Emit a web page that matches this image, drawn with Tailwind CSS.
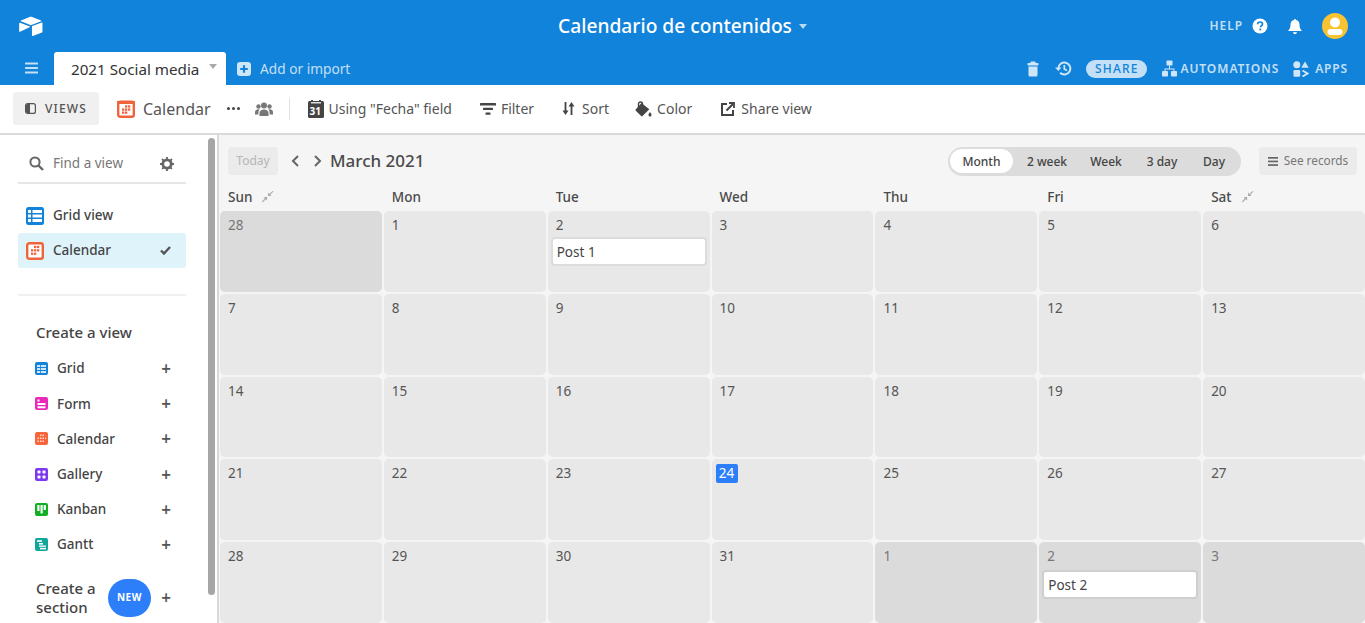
<!DOCTYPE html>
<html lang="en">
<head>
<meta charset="UTF-8">
<title>Calendario de contenidos</title>
<script src="https://cdn.jsdelivr.net/npm/@tailwindcss/browser@4"></script>
</head>
<body class="h-[623px] w-[1365px] overflow-hidden bg-white font-['Noto_Sans',sans-serif] text-[#444]">

<!-- top bar -->
<header class="h-[52px] bg-[#1283da] flex items-center text-white">
  <div class="flex-1 pl-[19px] flex items-center">
    <svg class="w-[24px] h-[21px]" viewBox="0 0 25 22" fill="#fff">
      <path d="M11 1 2 4.600c-.5.200-.5.800 0 1l9.200 3.600c.8.300 1.700.3 2.500 0L23 5.600c.5-.2.500-.8 0-1L13.700 1c-.9-.3-1.800-.3-2.700 0z"/>
      <path d="M13.500 11.200v9.300c0 .4.400.7.800.5l9.800-3.800c.3-.1.400-.3.400-.6V7.300c0-.4-.4-.7-.8-.5l-9.800 3.800c-.2.100-.4.300-.4.600z"/>
      <path d="M11.500 11.600 1 16.600c-.4.200-.9-.1-.9-.5V7.600c0-.4.500-.7.900-.5l10.400 3.900c.4.100.4.500.1.600z"/>
    </svg>
  </div>
  <div class="flex items-center gap-[7px] -ml-[2px]">
    <span class="text-[19.200px] font-medium leading-none">Calendario de contenidos</span>
    <span class="w-0 h-0 border-x-[4px] border-x-transparent border-t-[5px] border-t-white/70 mt-[1px]"></span>
  </div>
  <div class="flex-1 flex items-center justify-end pr-[17px]">
    <span class="text-[12px] font-semibold tracking-[0.08em] text-white/75">HELP</span>
    <svg class="w-[16px] h-[16px] ml-[9px]" viewBox="0 0 16 16"><circle cx="8" cy="8" r="7.500" fill="#fff"/><path d="M5.600 6.200C5.700 4.800 6.700 4 8.100 4c1.400 0 2.400.8 2.400 2 0 1-.6 1.500-1.300 2-.6.400-.8.700-.8 1.300" fill="none" stroke="#1283da" stroke-width="1.700"/><rect x="7.400" y="10.600" width="1.800" height="1.800" fill="#1283da"/></svg>
    <svg class="w-[16px] h-[17px] ml-[19px]" viewBox="0 0 16 17" fill="#fff"><path d="M8 1c-.6 0-1 .4-1 .9C4.800 2.400 3.500 4 3.500 6.500c0 3-.7 4.500-2 5.800-.3.300-.1.700.3.700h12.400c.4 0 .6-.4.300-.7-1.300-1.300-2-2.800-2-5.800C12.500 4 11.200 2.400 9 1.900 9 1.400 8.600 1 8 1z"/><path d="M6 14.200h4c0 1.100-.9 1.800-2 1.800s-2-.7-2-1.800z"/></svg>
    <div class="w-[26px] h-[26px] ml-[19px] rounded-full bg-[#f7c331] overflow-hidden flex items-center justify-center">
      <svg class="w-[26px] h-[26px]" viewBox="0 0 26 26" fill="#fff"><circle cx="13" cy="9.500" r="5"/><rect x="5.500" y="16" width="15" height="6" rx="3"/></svg>
    </div>
  </div>
</header>

<!-- tab row -->
<div class="h-[33px] bg-[#1283da] flex items-end text-white">
  <button class="w-[54px] h-[33px] flex items-center justify-center pl-[9px] pb-[1px]">
    <svg class="w-[14px] h-[12px]" viewBox="0 0 14 12" fill="#fff" opacity=".75"><rect y="0.500" width="13" height="2" rx=".6"/><rect y="5" width="13" height="2" rx=".6"/><rect y="9.500" width="13" height="2" rx=".6"/></svg>
  </button>
  <div class="relative w-[172px] h-[33px] bg-white rounded-t-[3px] flex items-center pl-[17px] pt-[1px] text-[#333] text-[15.200px]">
    2021 Social media
    <span class="absolute right-[9px] top-[12px] w-0 h-0 border-x-[4px] border-x-transparent border-t-[5px] border-t-[#aaa]"></span>
  </div>
  <div class="h-[33px] flex items-center ml-[11px] gap-[9px] pt-[1px] text-[13.700px] text-white/75">
    <svg class="w-[14px] h-[14px]" viewBox="0 0 13 13"><rect width="13" height="13" rx="3" fill="#cfe6f8"/><path d="M6.500 3v7M3 6.500h7" stroke="#1283da" stroke-width="2"/></svg>
    <span>Add or import</span>
  </div>
  <div class="ml-auto h-[33px] flex items-center pr-[17px] text-[12px] font-semibold tracking-[0.07em] text-white/75">
    <svg class="w-[12px] h-[16px] mr-[16px]" viewBox="0 0 12 16" fill="#cfe6f8"><rect x="3.500" y="0.500" width="5" height="2" rx=".5"/><rect x="0.500" y="2" width="11" height="2.500" rx=".8"/><path d="M1.500 5.500h9V14a1.500 1.500 0 0 1-1.500 1.500H3A1.500 1.500 0 0 1 1.500 14z"/></svg>
    <svg class="w-[17px] h-[15px] mr-[14px]" viewBox="0 0 17 15" fill="none" stroke="#cfe6f8" stroke-width="2"><path d="M3.300 7.500a6 6 0 1 1 1.800 4.300"/><path d="M9.300 4v4l2.700 1.600" stroke-width="1.700"/><path d="M0 6.500h6.500L3.300 10z" fill="#cfe6f8" stroke="none"/></svg>
    <span class="w-[61px] h-[18px] rounded-full bg-[#c4e0f7] text-[#1283da] flex items-center justify-center font-medium tracking-[0.1em] mr-[15px]">SHARE</span>
    <svg class="w-[15px] h-[17px] mr-[3px]" viewBox="0 0 15 17" fill="#cfe6f8"><rect x="4.500" y="0.500" width="6" height="5" rx=".8"/><rect x="0" y="11" width="6" height="5.500" rx=".8"/><rect x="9" y="11" width="6" height="5.500" rx=".8"/><path d="M7 5.500h1v3h4.500v3h-1v-2h-8v2h-1v-3H7z"/></svg>
    <span class="mr-[14px] tracking-[0.08em]">AUTOMATIONS</span>
    <svg class="w-[16px] h-[16px] mr-[6px]" viewBox="0 0 16 16" fill="#cfe6f8"><circle cx="3.800" cy="3.800" r="3.500"/><path d="M12 .5l3.700 6.300H8.300z"/><rect x="0.500" y="9" width="6.700" height="6.700" rx="1.200"/><path d="M9.500 9.500l5 3-5 3" fill="none" stroke="#cfe6f8" stroke-width="2"/></svg>
    <span>APPS</span>
  </div>
</div>

<!-- view toolbar -->
<div class="h-[50px] border-b-2 border-[#d9d9d9] flex items-center pl-[13px] pb-[1px] text-[14px] text-[#555]">
  <div class="w-[86px] h-[33px] bg-[#f0f0f0] rounded-[3px] flex items-center justify-center gap-[9px] text-[12px] font-medium tracking-[0.1em]">
    <svg class="w-[11px] h-[11px]" viewBox="0 0 11 11"><rect x=".6" y=".6" width="9.800" height="9.800" rx="2" fill="none" stroke="#555" stroke-width="1.200"/><path d="M1 2.500a1.500 1.500 0 0 1 1.500-1.500H5v9H2.500A1.500 1.500 0 0 1 1 8.500z" fill="#555"/></svg>
    VIEWS
  </div>
  <svg class="w-[18px] h-[18px] ml-[18px]" viewBox="0 0 18 18"><rect x="1.200" y="1.700" width="15.600" height="15.100" rx="2" fill="#fff" stroke="#f0643c" stroke-width="2.400"/><rect x="0" y="1" width="18" height="3" fill="#f0643c"/><g fill="#f0643c"><rect x="8" y="5.300" width="2.300" height="2.300"/><rect x="11" y="5.300" width="2.300" height="2.300"/><rect x="5" y="8.400" width="2.300" height="2.300"/><rect x="8" y="8.400" width="2.300" height="2.300"/><rect x="11" y="8.400" width="2.300" height="2.300"/><rect x="5" y="11.500" width="2.300" height="2.300"/><rect x="8" y="11.500" width="2.300" height="2.300"/></g></svg>
  <span class="ml-[8px] text-[16px]">Calendar</span>
  <span class="ml-[16px] flex gap-[2px]"><i class="w-[3px] h-[3px] rounded-full bg-[#444]"></i><i class="w-[3px] h-[3px] rounded-full bg-[#444]"></i><i class="w-[3px] h-[3px] rounded-full bg-[#444]"></i></span>
  <svg class="w-[18px] h-[14px] ml-[15px]" viewBox="0 0 18 14" fill="#777"><circle cx="9" cy="3.500" r="3"/><circle cx="3.500" cy="4.500" r="2.200"/><circle cx="14.500" cy="4.500" r="2.200"/><path d="M4.500 14v-3c0-2 2-3.500 4.500-3.500s4.500 1.500 4.500 3.500v3z"/><path d="M0 12.500V10c0-1.500 1.500-2.700 3.500-2.700.5 0 .7 0 .9.100-.7.900-1 2-1 3.100v2zM18 12.500V10c0-1.500-1.500-2.700-3.500-2.700-.5 0-.7 0-.9.100.7.900 1 2 1 3.100v2z"/></svg>
  <span class="w-px h-[22px] bg-[#e3e3e3] ml-[16px]"></span>
  <svg class="w-[16px] h-[18px] ml-[18px]" viewBox="0 0 16 18"><rect x="0" y="1" width="16" height="17" rx="1.500" fill="#444"/><rect x="3" y="0" width="2" height="3" fill="#444"/><rect x="11" y="0" width="2" height="3" fill="#444"/><rect x="3" y="2" width="10" height="1.500" fill="#ddd"/></svg>
  <span class="ml-[-14px] w-[13px] mt-[4px] text-[10px] font-bold text-white leading-none">31</span>
  <span class="ml-[6px]">Using "Fecha" field</span>
  <svg class="w-[16px] h-[12px] ml-[28px]" viewBox="0 0 16 12" fill="#444"><rect width="16" height="2.400" rx=".5"/><rect x="3" y="4.700" width="10" height="2.400" rx=".5"/><rect x="5.500" y="9.400" width="5" height="2.400" rx=".5"/></svg>
  <span class="ml-[5px]">Filter</span>
  <svg class="w-[13px] h-[13px] ml-[28px]" viewBox="0 0 13 13" fill="#444"><path d="M2.600 0h1.800v8.500h2.100L3.500 13 .5 8.500h2.100zM8.600 13h1.800V4.500h2.100L9.500 0l-3 4.500h2.100z"/></svg>
  <span class="ml-[7px]">Sort</span>
  <svg class="w-[17px] h-[16px] ml-[26px]" viewBox="0 0 17 16" fill="#444"><path d="M3.500 6V3a2 2 0 0 1 4 0v3" fill="none" stroke="#444" stroke-width="1.400"/><path d="M6.500 2 .8 8.300a1 1 0 0 0 0 1.400l5.300 5.300a1 1 0 0 0 1.400 0l6.800-6.800z"/><path d="M15 11c-.9 1.300-1.500 2-1.500 3a1.500 1.500 0 0 0 3 0c0-1-.6-1.700-1.500-3z"/></svg>
  <span class="ml-[5px]">Color</span>
  <svg class="w-[14px] h-[14px] ml-[29px]" viewBox="0 0 14 14" fill="none" stroke="#444" stroke-width="2"><path d="M6 2H1v11h11V8"/><path d="M5.500 8.500 12 2"/><path d="M8 1h5v5" stroke-width="1.800"/></svg>
  <span class="ml-[6px]">Share view</span>
</div>

<div class="flex h-[488px]">
  <!-- view sidebar -->
  <aside class="relative w-[219px] shrink-0 border-r-2 border-[#d9d9d9] pl-[18px] text-[13.500px] text-[#444]">
    <div class="absolute right-[2px] top-[3px] w-[7px] h-[457px] rounded-full bg-[#a6a6a6]"></div>
    <div class="w-[168px] h-[49px] border-b-2 border-[#e6e6e6] flex items-center pl-[11px] pt-[10px]">
      <svg class="w-[15px] h-[15px]" viewBox="0 0 15 15" fill="none" stroke="#666" stroke-width="2"><circle cx="6" cy="6" r="4.600"/><path d="M9.500 9.500 14 14" stroke-width="2.400"/></svg>
      <span class="ml-[9px] text-[#777]">Find a view</span>
      <svg class="w-[14px] h-[14px] ml-auto mr-[12px]" viewBox="0 0 14 14"><circle cx="7" cy="7" r="4.200" fill="none" stroke="#666" stroke-width="2.800"/><path d="M7 0v14M0 7h14M2 2l10 10M12 2 2 12" stroke="#666" stroke-width="1.800" stroke-dasharray="2.200 9.600 2.200"/></svg>
    </div>
    <div class="mt-[14px] w-[168px] h-[35px] flex items-center pl-[8px] gap-[9px]">
      <svg class="w-[18px] h-[18px]" viewBox="0 0 18 18"><rect width="18" height="18" rx="2.500" fill="#1283da"/><g fill="#fff"><rect x="2" y="3" width="3" height="3"/><rect x="6.500" y="3" width="9.500" height="3"/><rect x="2" y="7.500" width="3" height="3"/><rect x="6.500" y="7.500" width="9.500" height="3"/><rect x="2" y="12" width="3" height="3"/><rect x="6.500" y="12" width="9.500" height="3"/></g></svg>
      <span class="font-medium">Grid view</span>
    </div>
    <div class="w-[168px] h-[35px] bg-[#dff3fb] rounded-[3px] flex items-center pl-[8px] gap-[9px]">
      <svg class="w-[18px] h-[18px]" viewBox="0 0 18 18"><rect x="1.200" y="1.200" width="15.600" height="15.600" rx="2" fill="#fff" stroke="#f0643c" stroke-width="2.400"/><g fill="#f0643c"><rect x="8" y="3.800" width="2.300" height="2.300"/><rect x="11" y="3.800" width="2.300" height="2.300"/><rect x="5" y="7.200" width="2.300" height="2.300"/><rect x="8" y="7.200" width="2.300" height="2.300"/><rect x="11" y="7.200" width="2.300" height="2.300"/><rect x="5" y="10.600" width="2.300" height="2.300"/><rect x="8" y="10.600" width="2.300" height="2.300"/></g></svg>
      <span class="font-medium">Calendar</span>
      <svg class="w-[11px] h-[9px] ml-auto mr-[15px]" viewBox="0 0 11 9" fill="none" stroke="#555" stroke-width="2.400"><path d="M1 4.500 4 7.500 10 1"/></svg>
    </div>
    <div class="mt-[26px] w-[168px] border-t-2 border-[#f0f0f0]"></div>
    <div class="mt-[26px] ml-[18px] text-[15px] font-medium leading-5">Create a view</div>

    <div class="mt-[15px] w-[136px] ml-[17px] flex flex-col gap-[12.200px] font-medium">
      <div class="flex items-center h-[23px]">
        <svg class="w-[13px] h-[13px] mr-[9px]" viewBox="0 0 13 13"><rect width="13" height="13" rx="2" fill="#1283da"/><path d="M2 3h9v2H2zM2 6h9v2H2zM2 9h9v2H2z" fill="#cfe6f8"/><path d="M5 2h.8v9H5z" fill="#1283da"/></svg>
        <span>Grid</span><span class="ml-auto text-[17px] font-semibold leading-none text-[#555]">+</span>
      </div>
      <div class="flex items-center h-[23px]">
        <svg class="w-[13px] h-[13px] mr-[9px]" viewBox="0 0 13 13"><rect width="13" height="13" rx="2" fill="#e929ba"/><path d="M2.500 2.500h2v2h-2zM2.500 6h8v2h-8zM2.500 9.200h8v2h-8z" fill="#fff"/></svg>
        <span>Form</span><span class="ml-auto text-[17px] font-semibold leading-none text-[#555]">+</span>
      </div>
      <div class="flex items-center h-[23px]">
        <svg class="w-[13px] h-[13px] mr-[9px]" viewBox="0 0 13 13"><rect width="13" height="13" rx="2" fill="#f7653b"/><path d="M5 2.500h1.500V4H5zM7.500 2.500H9V4H7.500zM2.500 5.500H4V7H2.500zM5 5.500h1.500V7H5zM7.500 5.500H9V7H7.500zM10 5.500h1V7h-1zM2.500 8.500H4V10H2.500zM5 8.500h1.500V10H5zM7.500 8.500H9V10H7.500z" fill="#ffd9cc"/></svg>
        <span>Calendar</span><span class="ml-auto text-[17px] font-semibold leading-none text-[#555]">+</span>
      </div>
      <div class="flex items-center h-[23px]">
        <svg class="w-[13px] h-[13px] mr-[9px]" viewBox="0 0 13 13"><rect width="13" height="13" rx="2" fill="#7c39ed"/><g fill="#fff"><rect x="2.500" y="2.500" width="3" height="3" rx=".8"/><rect x="7.500" y="2.500" width="3" height="3" rx=".8"/><rect x="2.500" y="7.500" width="3" height="3" rx=".8"/><rect x="7.500" y="7.500" width="3" height="3" rx=".8"/></g></svg>
        <span>Gallery</span><span class="ml-auto text-[17px] font-semibold leading-none text-[#555]">+</span>
      </div>
      <div class="flex items-center h-[23px]">
        <svg class="w-[13px] h-[13px] mr-[9px]" viewBox="0 0 13 13"><rect width="13" height="13" rx="2" fill="#11af22"/><g fill="#fff"><rect x="2.300" y="2" width="2.200" height="6"/><rect x="5.500" y="2" width="2.200" height="8.500"/><rect x="8.700" y="2" width="2.200" height="5"/></g></svg>
        <span>Kanban</span><span class="ml-auto text-[17px] font-semibold leading-none text-[#555]">+</span>
      </div>
      <div class="flex items-center h-[23px]">
        <svg class="w-[13px] h-[13px] mr-[9px]" viewBox="0 0 13 13"><rect width="13" height="13" rx="2" fill="#0fa79c"/><g fill="#fff"><rect x="2" y="2.200" width="5" height="1.600"/><rect x="4" y="5" width="4" height="1.600"/><rect x="4" y="7.400" width="7" height="1.600" opacity=".8"/><rect x="5" y="9.800" width="6" height="1.600"/></g></svg>
        <span>Gantt</span><span class="ml-auto text-[17px] font-semibold leading-none text-[#555]">+</span>
      </div>
    </div>

    <div class="mt-[23px] ml-[18px] w-[135px] flex items-center">
      <span class="w-[72px] text-[15px] font-medium leading-[19px]">Create a section</span>
      <span class="w-[43px] h-[38px] shrink-0 rounded-full bg-[#2d7ff9] text-white text-[10px] font-bold tracking-[0.06em] flex items-center justify-center">NEW</span>
      <span class="ml-auto text-[17px] font-semibold leading-none text-[#555]">+</span>
    </div>
  </aside>

  <!-- calendar -->
  <main class="flex-1 min-w-0 bg-[#f5f5f5] flex flex-col">
    <div class="h-[52px] shrink-0 flex items-center pl-[9px] pr-[8px]">
      <span class="w-[50px] h-[28px] rounded-[4px] bg-[#ebebeb] text-[#b5b5b5] text-[12px] flex items-center justify-center">Today</span>
      <svg class="w-[9px] h-[12px] ml-[13px]" viewBox="0 0 9 12" fill="none" stroke="#666" stroke-width="2"><path d="M7 1 2 6l5 5"/></svg>
      <svg class="w-[9px] h-[12px] ml-[13px]" viewBox="0 0 9 12" fill="none" stroke="#666" stroke-width="2"><path d="m2 1 5 5-5 5"/></svg>
      <span class="ml-[8px] text-[17px] font-medium text-[#4a4a4a]">March 2021</span>
      <div class="ml-auto h-[29px] w-[293px] bg-[#dcdcdc] rounded-full flex items-center pl-[2px] pt-[1px] text-[12px] font-medium text-[#444]">
        <span class="w-[63px] h-[24px] -mt-[1px] pt-[1px] bg-white rounded-full flex items-center justify-center">Month</span>
        <span class="w-[68px] text-center">2 week</span>
        <span class="w-[50px] text-center">Week</span>
        <span class="w-[62px] text-center">3 day</span>
        <span class="w-[42px] text-center">Day</span>
      </div>
      <div class="ml-[18px] w-[98px] h-[28px] bg-[#ebebeb] rounded-[4px] flex items-center justify-center gap-[6px] text-[11.800px] text-[#777]">
        <svg class="w-[10px] h-[9px]" viewBox="0 0 10 9" fill="#666"><rect width="10" height="1.700"/><rect y="3.600" width="10" height="1.700"/><rect y="7.200" width="10" height="1.700"/></svg>
        See records
      </div>
    </div>

    <div class="h-[24px] shrink-0 grid grid-cols-7 gap-[2px] pl-[1px] pb-[4px] items-center text-[13.500px] font-medium text-[#4a4a4a]">
      <div class="pl-[8px] flex items-center gap-[10px]">Sun
        <svg class="w-[12px] h-[12px]" viewBox="0 0 12 12" fill="#aaa"><path d="M11.500.5 8.200 3.800l1.300 1.300H6V1.600l1.300 1.300L10.600 0zM.5 11.500l3.300-3.300 1.300 1.300V6H1.600l1.300 1.300L0 10.600z"/></svg>
      </div>
      <div class="pl-[8px]">Mon</div>
      <div class="pl-[8px]">Tue</div>
      <div class="pl-[8px]">Wed</div>
      <div class="pl-[8px]">Thu</div>
      <div class="pl-[8px]">Fri</div>
      <div class="pl-[8px] flex items-center gap-[11px]">Sat
        <svg class="w-[12px] h-[12px]" viewBox="0 0 12 12" fill="#aaa"><path d="M11.500.5 8.200 3.800l1.300 1.300H6V1.600l1.300 1.300L10.600 0zM.5 11.500l3.300-3.300 1.300 1.300V6H1.600l1.300 1.300L0 10.600z"/></svg>
      </div>
    </div>

    <div class="flex-1 min-h-0 grid grid-cols-7 grid-rows-5 gap-[2px] pl-[1px] text-[13.500px] text-[#555]">
      <div class="bg-[#dbdbdb] rounded-[5px] pl-[8px] pt-[4px] text-[#777]">28</div>
      <div class="bg-[#e8e8e8] rounded-[5px] pl-[8px] pt-[4px]">1</div>
      <div class="bg-[#e8e8e8] rounded-[5px] pl-[8px] pt-[4px]"><div>2</div>
        <div class="-ml-[5px] mr-[3px] mt-[2px] h-[29px] bg-white rounded-[4px] border-2 border-[#dcdcdc] flex items-center pl-[4px] text-[#444]">Post 1</div></div>
      <div class="bg-[#e8e8e8] rounded-[5px] pl-[8px] pt-[4px]">3</div>
      <div class="bg-[#e8e8e8] rounded-[5px] pl-[8px] pt-[4px]">4</div>
      <div class="bg-[#e8e8e8] rounded-[5px] pl-[8px] pt-[4px]">5</div>
      <div class="bg-[#e8e8e8] rounded-[5px] pl-[8px] pt-[4px]">6</div>
      <div class="bg-[#e8e8e8] rounded-[5px] pl-[8px] pt-[4px]">7</div>
      <div class="bg-[#e8e8e8] rounded-[5px] pl-[8px] pt-[4px]">8</div>
      <div class="bg-[#e8e8e8] rounded-[5px] pl-[8px] pt-[4px]">9</div>
      <div class="bg-[#e8e8e8] rounded-[5px] pl-[8px] pt-[4px]">10</div>
      <div class="bg-[#e8e8e8] rounded-[5px] pl-[8px] pt-[4px]">11</div>
      <div class="bg-[#e8e8e8] rounded-[5px] pl-[8px] pt-[4px]">12</div>
      <div class="bg-[#e8e8e8] rounded-[5px] pl-[8px] pt-[4px]">13</div>
      <div class="bg-[#e8e8e8] rounded-[5px] pl-[8px] pt-[4px]">14</div>
      <div class="bg-[#e8e8e8] rounded-[5px] pl-[8px] pt-[4px]">15</div>
      <div class="bg-[#e8e8e8] rounded-[5px] pl-[8px] pt-[4px]">16</div>
      <div class="bg-[#e8e8e8] rounded-[5px] pl-[8px] pt-[4px]">17</div>
      <div class="bg-[#e8e8e8] rounded-[5px] pl-[8px] pt-[4px]">18</div>
      <div class="bg-[#e8e8e8] rounded-[5px] pl-[8px] pt-[4px]">19</div>
      <div class="bg-[#e8e8e8] rounded-[5px] pl-[8px] pt-[4px]">20</div>
      <div class="bg-[#e8e8e8] rounded-[5px] pl-[8px] pt-[4px]">21</div>
      <div class="bg-[#e8e8e8] rounded-[5px] pl-[8px] pt-[4px]">22</div>
      <div class="bg-[#e8e8e8] rounded-[5px] pl-[8px] pt-[4px]">23</div>
      <div class="bg-[#e8e8e8] rounded-[5px] pl-[4px] pt-[4px]"><span class="inline-block w-[22px] h-[19px] bg-[#2d7ff9] rounded-[2px] text-white text-center leading-[19px]">24</span></div>
      <div class="bg-[#e8e8e8] rounded-[5px] pl-[8px] pt-[4px]">25</div>
      <div class="bg-[#e8e8e8] rounded-[5px] pl-[8px] pt-[4px]">26</div>
      <div class="bg-[#e8e8e8] rounded-[5px] pl-[8px] pt-[4px]">27</div>
      <div class="bg-[#e8e8e8] rounded-[5px] pl-[8px] pt-[4px]">28</div>
      <div class="bg-[#e8e8e8] rounded-[5px] pl-[8px] pt-[4px]">29</div>
      <div class="bg-[#e8e8e8] rounded-[5px] pl-[8px] pt-[4px]">30</div>
      <div class="bg-[#e8e8e8] rounded-[5px] pl-[8px] pt-[4px]">31</div>
      <div class="bg-[#dbdbdb] rounded-[5px] pl-[8px] pt-[4px] text-[#777]">1</div>
      <div class="bg-[#dbdbdb] rounded-[5px] pl-[8px] pt-[4px] text-[#777]"><div>2</div>
        <div class="-ml-[5px] mr-[3px] mt-[4px] h-[29px] bg-white rounded-[4px] border-2 border-[#cfcfcf] flex items-center pl-[4px] text-[#444]">Post 2</div></div>
      <div class="bg-[#dbdbdb] rounded-[5px] pl-[8px] pt-[4px] text-[#777]">3</div>
    </div>
  </main>
</div>
</body>
</html>
